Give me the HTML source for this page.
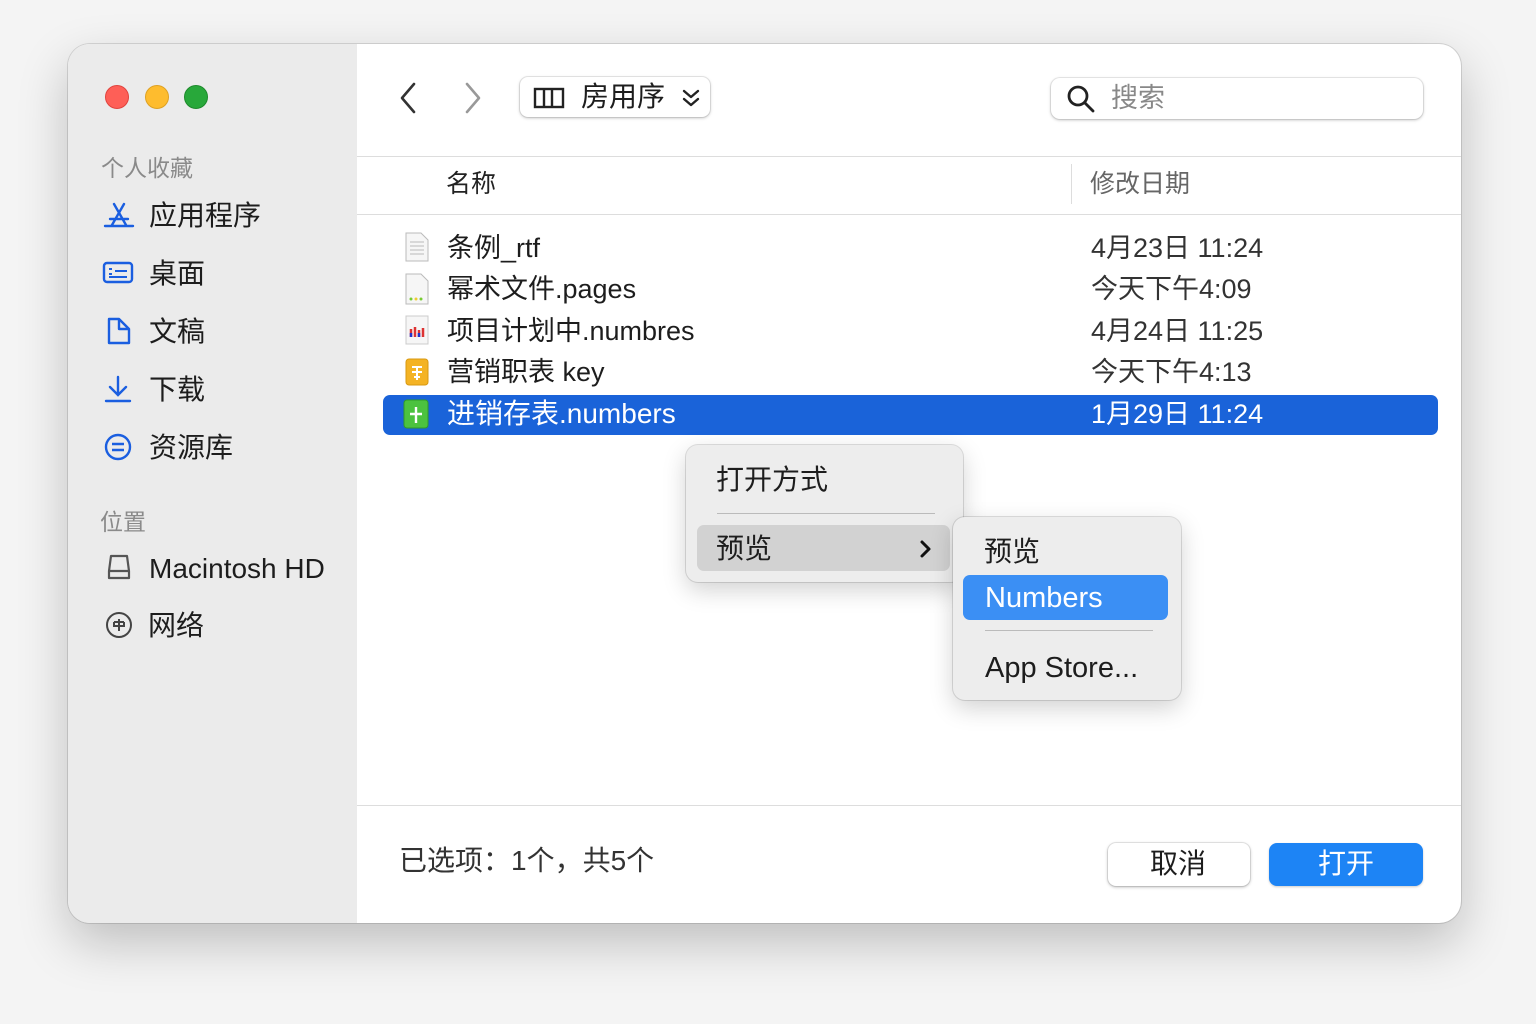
<!DOCTYPE html>
<html><head><meta charset="utf-8"><style>
*{margin:0;padding:0;box-sizing:border-box}
body{width:1536px;height:1024px;background:#f4f4f4;font-family:"Liberation Sans","Noto Sans CJK SC",sans-serif;position:relative;overflow:hidden;color:#1d1d1d}
.win{position:absolute;left:68px;top:44px;width:1393px;height:879px;border-radius:22px;background:#fff;overflow:hidden;box-shadow:0 20px 50px rgba(0,0,0,.22),0 0 0 1px rgba(0,0,0,.12)}
.side{position:absolute;left:0;top:0;width:289px;height:100%;background:#ebebeb}
.a{position:absolute;white-space:nowrap;line-height:1}
.dot{position:absolute;width:24px;height:24px;border-radius:50%;top:41px}
.si{font-size:28px;color:#1d1d1d}
.sh{font-size:23px;color:#8a8a8a}
.ic{position:absolute}
.row{font-size:27px}
.date{font-size:27px;color:#333}
.menu{position:absolute;background:#ededed;border-radius:12px;box-shadow:0 8px 24px rgba(0,0,0,.18),0 0 0 1px rgba(0,0,0,.12)}
</style></head><body>
<div class="win">
 <div class="side">
  <div class="dot" style="left:37px;background:#fe5f57;border:1px solid #e0443e"></div>
  <div class="dot" style="left:77px;background:#febc2e;border:1px solid #dea123"></div>
  <div class="dot" style="left:116px;background:#28a83a;border:1px solid #1e8a2c"></div>
  <div class="a sh" style="left:33px;top:113px">个人收藏</div>
  <svg class="ic" style="left:35px;top:157px" width="32" height="28" viewBox="0 0 32 28" fill="none" stroke="#1a5ee0" stroke-width="2.4" stroke-linecap="round"><path d="M11 3L23 24M21 3L9 24M2 25H30M7 18H25"/></svg>
  <div class="a si" style="left:81px;top:158px">应用程序</div>
  <svg class="ic" style="left:34px;top:217px" width="32" height="24" viewBox="0 0 32 24" fill="none" stroke="#1a5ee0" stroke-width="2.4"><rect x="2" y="2" width="28" height="19" rx="3"/><path d="M7 8h3M7 13h3M13 10h12M7 16h18" stroke-width="2"/></svg>
  <div class="a si" style="left:81px;top:216px">桌面</div>
  <svg class="ic" style="left:38px;top:272px" width="26" height="30" viewBox="0 0 26 30" fill="none" stroke="#1a5ee0" stroke-width="2.4" stroke-linejoin="round"><path d="M3 3H13L23 13V27H3Z"/><path d="M13 3V13H23"/></svg>
  <div class="a si" style="left:81px;top:274px">文稿</div>
  <svg class="ic" style="left:36px;top:330px" width="28" height="30" viewBox="0 0 28 30" fill="none" stroke="#1a5ee0" stroke-width="2.4" stroke-linecap="round"><path d="M14 3V21M6 13L14 21L22 13M2 27H26"/></svg>
  <div class="a si" style="left:81px;top:332px">下载</div>
  <svg class="ic" style="left:36px;top:389px" width="28" height="28" viewBox="0 0 28 28" fill="none" stroke="#1a5ee0" stroke-width="2.4"><circle cx="14" cy="14" r="12"/><path d="M8 11H20M8 17H20"/></svg>
  <div class="a si" style="left:81px;top:390px">资源库</div>
  <div class="a sh" style="left:32px;top:467px">位置</div>
  <svg class="ic" style="left:38px;top:509px" width="26" height="28" viewBox="0 0 26 28" fill="none" stroke="#555" stroke-width="2.2"><path d="M5 3H21L23 18V25H3V18Z" stroke-linejoin="round"/><path d="M3 18H23"/></svg>
  <div class="a si" style="left:81px;top:511px">Macintosh HD</div>
  <svg class="ic" style="left:37px;top:567px" width="28" height="28" viewBox="0 0 28 28" fill="none" stroke="#444" stroke-width="2"><circle cx="14" cy="14" r="12"/><path d="M9 11H19M14 8V20M9 11V15H19V11"/></svg>
  <div class="a si" style="left:80px;top:568px">网络</div>
 </div>
 <svg class="ic" style="left:330px;top:38px" width="20" height="32" viewBox="0 0 20 32" fill="none" stroke="#333" stroke-width="2.6" stroke-linecap="round" stroke-linejoin="round"><path d="M16 2L4 16L16 30"/></svg>
 <svg class="ic" style="left:395px;top:38px" width="20" height="32" viewBox="0 0 20 32" fill="none" stroke="#999" stroke-width="2.6" stroke-linecap="round" stroke-linejoin="round"><path d="M4 2L16 16L4 30"/></svg>
 <div style="position:absolute;left:452px;top:33px;width:190px;height:40px;border-radius:8px;background:#fff;box-shadow:0 1px 3px rgba(0,0,0,.25),0 0 0 1px rgba(0,0,0,.08)"></div>
 <svg class="ic" style="left:465px;top:42px" width="32" height="24" viewBox="0 0 32 24" fill="none" stroke="#222" stroke-width="2.4"><rect x="2" y="3" width="28" height="18"/><path d="M11 3V21M19 3V21"/></svg>
 <div class="a" style="left:513px;top:39px;font-size:28px">房用序</div>
 <svg class="ic" style="left:613px;top:43px" width="20" height="22" viewBox="0 0 20 22" fill="none" stroke="#222" stroke-width="2.4" stroke-linecap="round" stroke-linejoin="round"><path d="M3 4L10 10L17 4M3 12L10 18L17 12"/></svg>
 <div style="position:absolute;left:983px;top:34px;width:372px;height:41px;border-radius:9px;background:#fff;box-shadow:0 1px 3px rgba(0,0,0,.25),0 0 0 1px rgba(0,0,0,.07)"></div>
 <svg class="ic" style="left:998px;top:40px" width="30" height="30" viewBox="0 0 30 30" fill="none" stroke="#222" stroke-width="2.8" stroke-linecap="round"><circle cx="12" cy="12" r="9"/><path d="M19 19L27 27"/></svg>
 <div class="a" style="left:1043px;top:41px;font-size:27px;color:#888">搜索</div>
 <div style="position:absolute;left:289px;top:112px;width:1104px;height:1px;background:#ddd"></div>
 <div class="a" style="left:378px;top:128px;font-size:25px;color:#222">名称</div>
 <div style="position:absolute;left:1003px;top:120px;width:1px;height:40px;background:#ddd"></div>
 <div class="a" style="left:1022px;top:128px;font-size:25px;color:#666">修改日期</div>
 <div style="position:absolute;left:289px;top:170px;width:1104px;height:1px;background:#ddd"></div>
 <svg class="ic" style="left:337px;top:188px" width="24" height="30" viewBox="0 0 24 30"><path d="M1 1H16L23 8V29H1Z" fill="#f6f6f6" stroke="#bbb"/><path d="M5 10H19M5 14H19M5 18H19M5 22H19" stroke="#bbb"/></svg>
 <div class="a row" style="left:379px;top:191px">条例_rtf</div>
 <div class="a date" style="left:1023px;top:191px">4月23日 11:24</div>
 <svg class="ic" style="left:337px;top:229px" width="24" height="32" viewBox="0 0 24 32"><path d="M1 1H16L23 8V31H1Z" fill="#f6f6f6" stroke="#bbb"/><circle cx="6" cy="26" r="1.5" fill="#7c3"/><circle cx="11" cy="26" r="1.5" fill="#ec3"/><circle cx="16" cy="26" r="1.5" fill="#7c3"/></svg>
 <div class="a row" style="left:379px;top:232px">幂术文件.pages</div>
 <div class="a date" style="left:1023px;top:232px">今天下午4:09</div>
 <svg class="ic" style="left:337px;top:271px" width="24" height="30" viewBox="0 0 24 30"><path d="M1 1H23V29H1Z" fill="#f6f6f6" stroke="#ccc"/><path d="M6 14V22M10 12V22M14 15V22M18 13V22" stroke="#d33" stroke-width="2.5"/><path d="M6 18V22M14 18V22" stroke="#23c" stroke-width="2.5"/></svg>
 <div class="a row" style="left:379px;top:274px">项目计划中.numbres</div>
 <div class="a date" style="left:1023px;top:274px">4月24日 11:25</div>
 <svg class="ic" style="left:337px;top:314px" width="24" height="28" viewBox="0 0 24 28"><rect x="1" y="1" width="22" height="26" rx="3" fill="#f4b324" stroke="#d99a10"/><path d="M7 9H17M7 14H17M9 19H15M12 9V22" stroke="#fff" stroke-width="2"/></svg>
 <div class="a row" style="left:379px;top:315px">营销职表 key</div>
 <div class="a date" style="left:1023px;top:315px">今天下午4:13</div>
 <div style="position:absolute;left:315px;top:351px;width:1055px;height:40px;border-radius:7px;background:#1a63d9"></div>
 <svg class="ic" style="left:335px;top:355px" width="26" height="30" viewBox="0 0 26 30"><rect x="1" y="1" width="24" height="28" rx="3" fill="#4cc23f" stroke="#2f9a28"/><path d="M13 8V24M7 15H19" stroke="#fff" stroke-width="2.4"/></svg>
 <div class="a row" style="left:379px;top:356px;color:#fff;font-size:28px">进销存表.numbers</div>
 <div class="a date" style="left:1023px;top:357px;color:#fff">1月29日 11:24</div>
 <div style="position:absolute;left:289px;top:761px;width:1104px;height:1px;background:#ddd"></div>
 <div class="a" style="left:331px;top:803px;font-size:28px;color:#333">已选项：1个，共5个</div>
 <div style="position:absolute;left:1040px;top:799px;width:142px;height:43px;border-radius:8px;background:#fff;box-shadow:0 1px 3px rgba(0,0,0,.3),0 0 0 1px rgba(0,0,0,.08)"></div>
 <div class="a" style="left:1082px;top:806px;font-size:28px">取消</div>
 <div style="position:absolute;left:1201px;top:799px;width:154px;height:43px;border-radius:8px;background:#1d84f5;box-shadow:0 1px 2px rgba(0,0,0,.2)"></div>
 <div class="a" style="left:1250px;top:806px;font-size:28px;color:#fff">打开</div>
</div>
<div class="menu" style="left:686px;top:445px;width:277px;height:137px"></div>
<div class="a" style="left:716px;top:466px;font-size:28px">打开方式</div>
<div style="position:absolute;left:717px;top:513px;width:218px;height:1px;background:#bbb"></div>
<div style="position:absolute;left:697px;top:525px;width:253px;height:46px;border-radius:7px;background:#d2d2d2"></div>
<div class="a" style="left:716px;top:535px;font-size:28px">预览</div>
<svg class="ic" style="left:919px;top:539px" width="14" height="20" viewBox="0 0 14 20" fill="none" stroke="#111" stroke-width="3" stroke-linecap="round" stroke-linejoin="round"><path d="M3 3L10 10L3 17"/></svg>
<div class="menu" style="left:953px;top:517px;width:228px;height:183px"></div>
<div class="a" style="left:984px;top:538px;font-size:28px">预览</div>
<div style="position:absolute;left:963px;top:575px;width:205px;height:45px;border-radius:7px;background:#3b8ff4"></div>
<div class="a" style="left:985px;top:584px;font-size:29px;color:#fff">Numbers</div>
<div style="position:absolute;left:985px;top:630px;width:168px;height:1px;background:#bbb"></div>
<div class="a" style="left:985px;top:654px;font-size:29px">App Store...</div>
</body></html>
